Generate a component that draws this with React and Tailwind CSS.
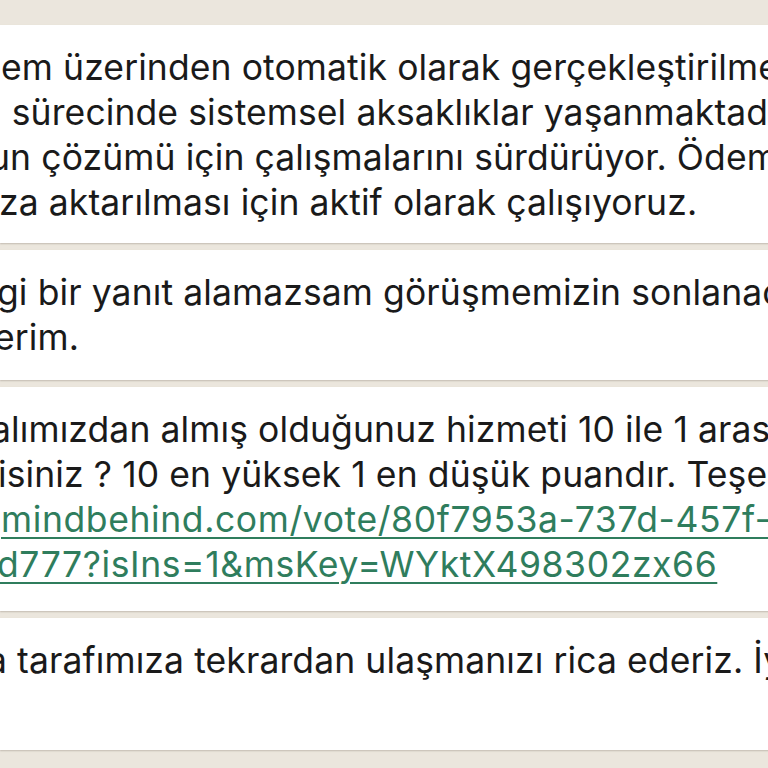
export default function App() {
  // each bubble is cut on both sides by the screenshot, so every line holds only its visible fragment
  const bubbles = [
    {
      pb: 'pb-[18px]',
      lines: [
        { text: 'em üzerinden otomatik olarak gerçekleştirilmesi', indent: 'pl-[1px]' },
        { text: 'ı sürecinde sistemsel aksaklıklar yaşanmaktadır.', indent: 'ml-[-7px]' },
        { text: 'un çözümü için çalışmalarını sürdürüyor. Ödeme', indent: 'ml-[-11px]' },
        { text: 'za aktarılması için aktif olarak çalışıyoruz.', indent: 'ml-[-1px]' },
      ],
    },
    {
      pb: 'pb-[20px]',
      lines: [
        { text: 'gi bir yanıt alamazsam görüşmemizin sonlanacağını', indent: 'ml-[-3px]' },
        { text: 'erim.', indent: 'ml-[-6px]' },
      ],
    },
    {
      pb: 'pb-[24px]',
      lines: [
        { text: 'alımızdan almış olduğunuz hizmeti 10 ile 1 arasında', indent: 'ml-[-9px]' },
        { text: 'isiniz ? 10 en yüksek 1 en düşük puandır. Teşekkürler', indent: 'ml-[-2px]' },
        { text: 'mindbehind.com/vote/80f7953a-737d-457f-', indent: 'pl-[1px]', link: true },
        { text: 'd777?isIns=1&msKey=WYktX498302zx66', indent: 'ml-[-3px]', link: true },
      ],
    },
    {
      pb: 'pb-[22px]',
      lines: [
        { text: 'a tarafımıza tekrardan ulaşmanızı rica ederiz. İyi', indent: 'ml-[-13px]' },
        { text: '', indent: '' },
      ],
    },
  ];

  return (
    <div className="w-[768px] h-[768px] overflow-hidden bg-[#ebe6dd] flex flex-col gap-[7px] pt-[25px] font-['Inter',sans-serif]">
      {bubbles.map((b, i) => (
        <div
          key={i}
          className={`bg-white w-[820px] pt-[20px] ${b.pb} shadow-[0_1px_1.5px_rgba(120,110,95,0.35)] text-[35.5px] leading-[45px] text-[#1a1a1a] tracking-[0.1px]`}
        >
          {b.lines.map((l, j) => (
            <div key={j} className={`whitespace-nowrap h-[45px] ${l.indent}`}>
              {l.link ? (
                <span className="text-[#2f7d5d] tracking-[0.6px] underline decoration-[2px] underline-offset-[5px]">{l.text}</span>
              ) : (
                l.text
              )}
            </div>
          ))}
        </div>
      ))}
    </div>
  );
}
